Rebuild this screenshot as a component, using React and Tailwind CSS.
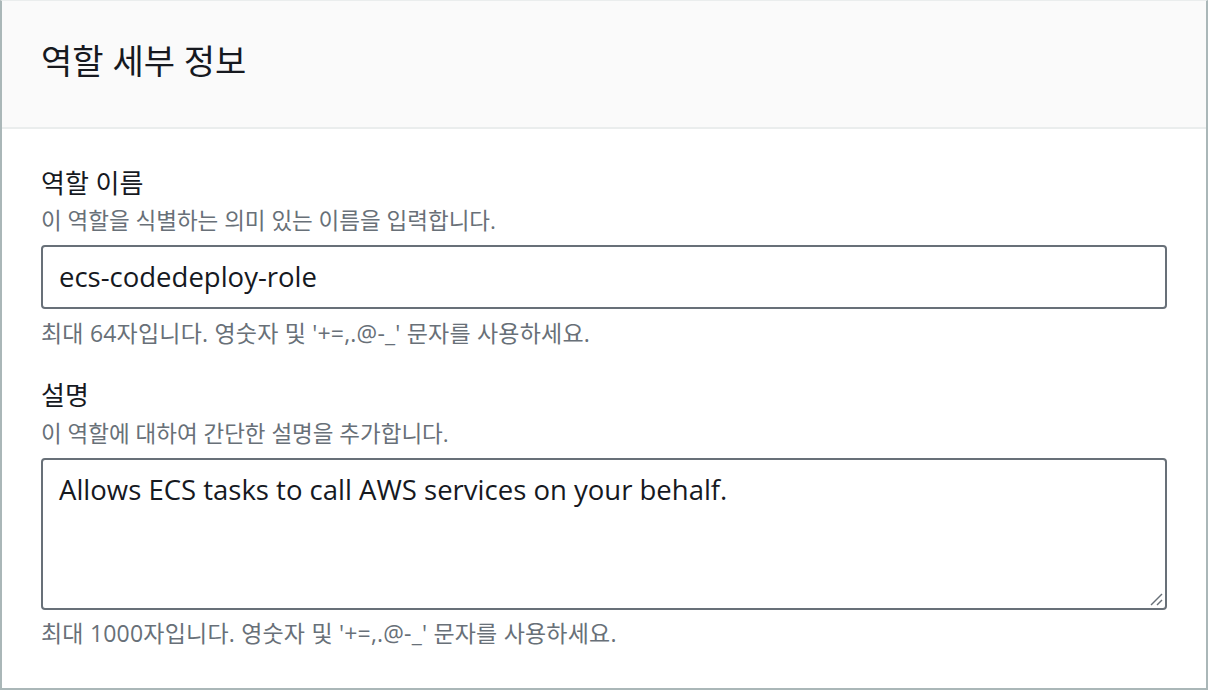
export default function App() {
  const kr = { fontFamily: '"Open Sans", "Noto Sans CJK KR", sans-serif' };
  return (
    <div className="w-[1208px] h-[690px] bg-white" style={kr}>
      <div className="h-full border-t border-t-[#eaeded] border-l-2 border-r-2 border-b-2 border-l-[#aab7b8] border-r-[#aab7b8] border-b-[#aab7b8] flex flex-col">
        <div className="h-[128px] bg-[#fafafa] border-b-2 border-b-[#eaeded] flex items-center px-[39px]">
          <h2 className="text-[34px] leading-[40px] text-[#16191f] font-normal -mt-[7px]" style={kr}>역할 세부 정보</h2>
        </div>
        <div className="px-[39px] pt-[39px] flex flex-col">
          <label className="text-[26px] leading-[30px] text-[#16191f]">역할 이름</label>
          <p className="mt-[9px] text-[22.5px] leading-[28px] text-[#687078]">이 역할을 식별하는 의미 있는 이름을 입력합니다.</p>
          <div className="mt-[10px] h-[64px] border-2 border-[#687078] rounded-[4px] flex items-center pl-[16px] text-[27.5px] text-[#16191f]">
            ecs-codedeploy-role
          </div>
          <p className="mt-[10px] text-[23px] leading-[28px] text-[#687078] tracking-[0.2px]">최대 64자입니다. 영숫자 및 '+=,.@-_' 문자를 사용하세요.</p>
          <label className="mt-[33px] text-[26px] leading-[30px] text-[#16191f]">설명</label>
          <p className="mt-[10px] text-[22.5px] leading-[28px] text-[#687078]">이 역할에 대하여 간단한 설명을 추가합니다.</p>
          <div className="relative mt-[10px] h-[152px] border-2 border-[#687078] rounded-[4px] pl-[16px] pt-[14px] text-[27.5px] leading-[32px] text-[#16191f]">
            Allows ECS tasks to call AWS services on your behalf.
            <svg className="absolute right-[2px] bottom-[2px]" width="14" height="14" viewBox="0 0 14 14">
              <line x1="2" y1="13" x2="13" y2="2" stroke="#687078" strokeWidth="1.5" />
              <line x1="8" y1="13" x2="13" y2="8" stroke="#687078" strokeWidth="1.5" />
            </svg>
          </div>
          <p className="mt-[9px] text-[23px] leading-[28px] text-[#687078] tracking-[0.2px]">최대 1000자입니다. 영숫자 및 '+=,.@-_' 문자를 사용하세요.</p>
        </div>
      </div>
    </div>
  );
}
